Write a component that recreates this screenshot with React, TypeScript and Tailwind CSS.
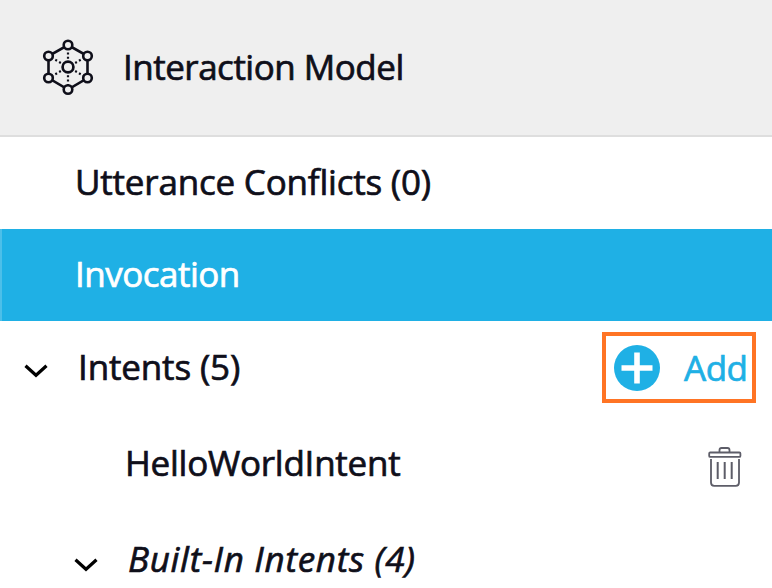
import type { ReactNode } from "react";

const HEX_NODES = [
  [28, 5],
  [47.5, 16],
  [47.5, 38],
  [28, 49.5],
  [8.5, 38],
  [8.5, 16],
];

function ModelIcon() {
  return (
    <svg width="56" height="56" viewBox="0 0 56 56" fill="none" stroke="#0f0f1a" className="shrink-0 overflow-visible">
      <polygon points={HEX_NODES.map((n) => n.join(",")).join(" ")} strokeWidth="2.6" />
      {HEX_NODES.map(([x, y]) => (
        <line key={`${x}-${y}`} x1="28" y1="27" x2={x} y2={y} strokeWidth="2.2" strokeDasharray="2 2.4" strokeDashoffset="0.6" />
      ))}
      {HEX_NODES.map(([x, y]) => (
        <circle key={`${x}-${y}`} cx={x} cy={y} r="4.3" strokeWidth="2.6" fill="#efefef" />
      ))}
      <circle cx="28" cy="27" r="5.4" strokeWidth="2.7" fill="#efefef" />
    </svg>
  );
}

function Chevron() {
  return (
    <svg width="24" height="14" viewBox="0 0 24 14" fill="none" stroke="#000" strokeWidth="3.2" className="shrink-0">
      <path d="M1.5 1.8 L12 11.3 L22.5 1.8" />
    </svg>
  );
}

function PlusIcon() {
  return (
    <svg width="46" height="46" viewBox="0 0 46 46" className="mt-px shrink-0">
      <circle cx="23" cy="23" r="23" fill="#1fb0e5" />
      <path d="M23 7.5V38.5M7.5 23H38.5" stroke="#fff" strokeWidth="5.6" />
    </svg>
  );
}

function TrashIcon() {
  return (
    <svg width="34" height="40" viewBox="0 0 34 40" fill="none" stroke="#5d5d68" strokeWidth="1.8" className="shrink-0">
      <path d="M11.5 5V3Q11.5 1 13.5 1H19.5Q21.5 1 21.5 3V5" />
      <rect x="1.2" y="5.5" width="31.2" height="4.4" rx="1" />
      <path d="M3 12V35.5Q3 38.8 6.2 38.8H27.8Q31 38.8 31 35.5V12" />
      <path d="M9.7 15V32M16.7 15V32M23.7 15V32" strokeWidth="2" />
    </svg>
  );
}

function Label({ className = "", children }: { className?: string; children: ReactNode }) {
  return <span className={`whitespace-nowrap [-webkit-text-stroke:0.7px] ${className}`}>{children}</span>;
}

export default function App() {
  return (
    <div className="h-[588px] w-[772px] overflow-hidden bg-white font-['Open_Sans',sans-serif] text-[35px] leading-[48px] font-medium text-[#0f0f1a]">
      {/* Section header */}
      <header className="flex h-[137px] items-center border-b-2 border-[#dedede] bg-[#efefef] pl-10">
        <ModelIcon />
        <Label className="ml-[27px] pb-0.5 tracking-[-0.5px]">Interaction Model</Label>
      </header>

      <nav>
        <div className="flex h-[92px] items-center pl-[75px]">
          <Label className="pb-0.5 tracking-[-0.2px]">Utterance Conflicts (0)</Label>
        </div>
        <div className="flex h-[92px] items-center border-l-2 border-[#4cbfe9] bg-[#1fb0e5] pl-[73px] text-white">
          <Label className="pb-0.5 tracking-[-0.5px]">Invocation</Label>
        </div>

        {/* Intents */}
        <div className="flex h-24 items-center pr-4 pl-6">
          <div className="pt-[3px]">
            <Chevron />
          </div>
          <Label className="ml-[30px] pb-1 tracking-[-0.15px]">Intents (5)</Label>
          <button className="mb-[3px] ml-auto flex h-[71px] w-[154px] items-center border-4 border-[#ff7424] pl-2 font-medium text-[#1fb0e5]">
            <PlusIcon />
            <Label className="ml-6 tracking-[-0.5px]">Add</Label>
          </button>
        </div>
        <div className="flex h-24 items-center justify-between pr-[30px] pl-[125px]">
          <Label className="pb-1 tracking-[-0.25px]">HelloWorldIntent</Label>
          <div className="pt-1">
            <TrashIcon />
          </div>
        </div>
        <div className="flex h-24 items-center pl-[74px]">
          <div className="pt-[7px]">
            <Chevron />
          </div>
          <Label className="ml-[30px] pb-1 tracking-[0.7px] italic">Built-In Intents (4)</Label>
        </div>
      </nav>
    </div>
  );
}
